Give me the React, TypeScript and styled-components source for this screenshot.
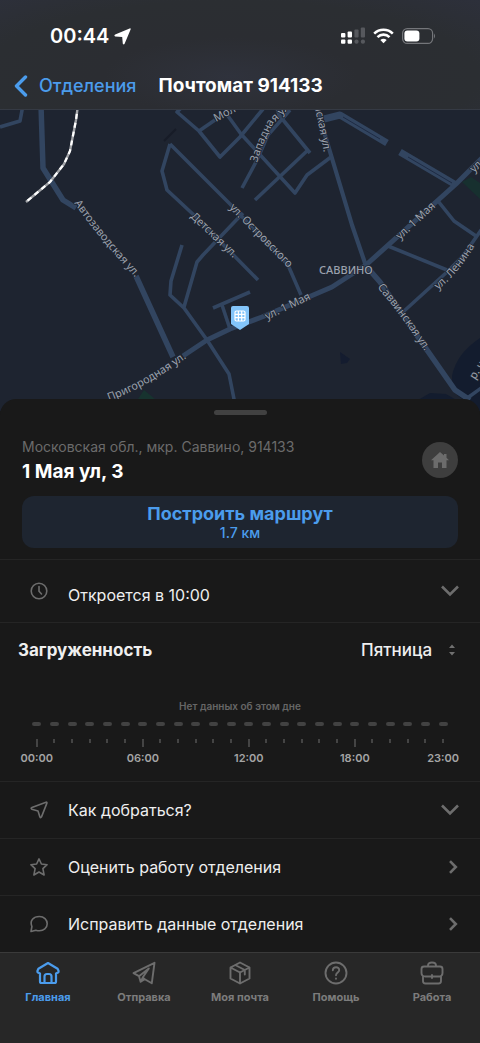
import React from 'react';
import styled, { createGlobalStyle } from 'styled-components';

const GlobalStyle = createGlobalStyle`
  *, *::before, *::after { box-sizing: border-box; }
  body { margin: 0; background: #191919; }
  button, select { font-family: inherit; color: inherit; }
`;

const Screen = styled.div`
  min-height: 100vh;
  display: flex;
  flex-direction: column;
  font-family: Inter, 'Liberation Sans', sans-serif;
  color: #efefef;
  background: #191919;
`;

const Header = styled.header`
  padding-top: 24px;
  background: radial-gradient(ellipse at 48% 70%, #2f323c 0%, #2b2d32 36%, #2b2e32 70%, #2d303b 100%);
  border-bottom: 1px solid #353a44;
`;

const StatusBar = styled.div`
  height: 24px;
  display: flex;
  align-items: center;
  justify-content: space-between;
  padding: 0 44px 0 50px;
  color: #fff;
`;

const StatusGroup = styled.div<{ $gap: number }>`
  display: flex;
  align-items: center;
  gap: ${(p) => p.$gap}px;
`;

const Clock = styled.span`
  font-size: 20px;
  line-height: 24px;
  font-weight: 600;
`;

const NavBar = styled.nav`
  height: 61px;
  display: flex;
  align-items: center;
  gap: 22px;
  padding: 14px 14px 0;
`;

const BackLink = styled.a`
  display: flex;
  align-items: center;
  gap: 11px;
  font-size: 18px;
  line-height: 24px;
  font-weight: 500;
  color: #4b9cec;
  text-decoration: none;
`;

const Title = styled.h1`
  margin: 0;
  font-size: 19px;
  line-height: 24px;
  font-weight: 700;
  color: #fff;
`;

const MapArea = styled.section`
  height: 301px;
  overflow: hidden;
  background: #1e2430;
  svg { display: block; width: 100%; height: 100%; }
`;

const Sheet = styled.main`
  position: relative;
  flex: 1;
  margin-top: -12px;
  border-radius: 16px 16px 0 0;
  background: #191919;
`;

const Handle = styled.div`
  width: 53px;
  height: 5px;
  border-radius: 3px;
  margin: 0 auto;
  background: #414141;
`;

const Summary = styled.section`
  padding: 11px 22px 11px;
  border-bottom: 1px solid #252525;
`;

const AddressRow = styled.div`
  display: flex;
  align-items: center;
  justify-content: space-between;
  margin-top: 20px;
`;

const Region = styled.p`
  margin: 0;
  font-size: 14px;
  line-height: 24px;
  color: #6b6b6b;
`;

const Street = styled.h2`
  margin: 0;
  font-size: 19px;
  line-height: 26px;
  font-weight: 700;
  color: #fff;
`;

const HomeButton = styled.button`
  width: 36px;
  height: 36px;
  padding: 0;
  border: 0;
  border-radius: 50%;
  display: grid;
  place-items: center;
  background: #3e3e3e;
  color: #6c6c6c;
`;

const RouteButton = styled.button`
  width: 100%;
  height: 52px;
  margin-top: 11px;
  padding: 2px 0 0;
  border: 0;
  border-radius: 12px;
  display: flex;
  flex-direction: column;
  align-items: center;
  justify-content: center;
  background: #1e2530;
  color: #4b9cec;
`;

const RouteTitle = styled.span`
  font-size: 18px;
  line-height: 20px;
  font-weight: 700;
`;

const RouteDistance = styled.span`
  font-size: 14px;
  line-height: 18px;
  font-weight: 500;
`;

const ActionRow = styled.button<{ $tall?: boolean }>`
  width: 100%;
  height: ${(p) => (p.$tall ? 63 : 57)}px;
  padding: 0 21px 0 30px;
  border: 0;
  border-bottom: 1px solid #252525;
  display: grid;
  grid-template-columns: 18px 1fr auto;
  column-gap: 20px;
  align-items: center;
  background: none;
  color: #6d6d6d;
  text-align: left;
  &:last-child { height: 56px; border-bottom: 0; }
`;

const ActionLabel = styled.span<{ $low?: boolean }>`
  font-size: 16px;
  line-height: 24px;
  padding-top: ${(p) => (p.$low ? 8 : 0)}px;
  color: #efefef;
`;

const Load = styled.section`
  padding-top: 15px;
  border-bottom: 1px solid #252525;
`;

const LoadHeader = styled.div`
  display: flex;
  align-items: center;
  justify-content: space-between;
  padding: 0 24px 0 18px;
`;

const LoadTitle = styled.h3`
  margin: 0;
  font-size: 17px;
  line-height: 24px;
  font-weight: 700;
`;

const DayPicker = styled.label`
  display: flex;
  align-items: center;
  gap: 15px;
`;

const DaySelect = styled.select`
  appearance: none;
  border: 0;
  padding: 0;
  background: none;
  font-size: 17px;
  line-height: 24px;
  font-weight: 500;
`;

const EmptyNote = styled.p`
  margin: 37px 0 9px;
  text-align: center;
  font-size: 10px;
  line-height: 14px;
  font-weight: 600;
  color: #666;
`;

const HourGrid = styled.div`
  display: grid;
  grid-template-columns: repeat(24, minmax(0, 1fr));
  padding: 0 28px 16px;
`;

const Hour = styled.div`
  display: flex;
  flex-direction: column;
  align-items: center;
`;

const Bar = styled.div`
  width: 9px;
  height: 4px;
  border-radius: 2px;
  background: #424242;
`;

const TickSlot = styled.div`
  height: 12px;
  margin-top: 13px;
`;

const Tick = styled.div<{ $major: boolean }>`
  width: 2px;
  height: ${(p) => (p.$major ? 8 : 4)}px;
  background: #444;
`;

const HourLabel = styled.span`
  font-size: 11px;
  line-height: 14px;
  font-weight: 600;
  white-space: nowrap;
  color: #a5a5a5;
`;

const TabBar = styled.nav`
  position: sticky;
  bottom: 0;
  height: 91px;
  padding-top: 8px;
  display: grid;
  grid-template-columns: repeat(5, 1fr);
  align-items: start;
  background: #272727;
  border-top: 1px solid #3a3a3a;
`;

const Tab = styled.a<{ $active?: boolean }>`
  display: flex;
  flex-direction: column;
  align-items: center;
  gap: 4px;
  font-size: 11px;
  line-height: 16px;
  font-weight: 700;
  text-decoration: none;
  color: ${(p) => (p.$active ? '#4b9cec' : '#7c7c7c')};
  svg { color: ${(p) => (p.$active ? '#4b9cec' : '#6d6d6d')}; }
`;

type IconProps = { size?: number; box?: number; stroke?: number; children: React.ReactNode };
const Icon = ({ size = 24, box = 24, stroke = 2, children }: IconProps) => (
  <svg width={size} height={size} viewBox={`0 0 ${box} ${box}`} fill="none" stroke="currentColor"
    strokeWidth={stroke} strokeLinecap="round" strokeLinejoin="round" aria-hidden="true">{children}</svg>
);

const ChevronDown = () => (
  <svg width="18" height="12" viewBox="0 0 18 12" fill="none" stroke="currentColor" strokeWidth="2.6" aria-hidden="true">
    <path d="M1 1.500 9 9.500 17 1.500" />
  </svg>
);
const ChevronRight = () => (
  <svg width="10" height="14" viewBox="0 0 10 14" fill="none" stroke="currentColor" strokeWidth="2.6" aria-hidden="true">
    <path d="M1 1.200 6.800 7 1 12.800" />
  </svg>
);

const thinRoads = [
  'M0 127 20 121 23 105',
  'M181 108 177 112 199 131 220 157 240 137 263 109',
  'M199 131 215 120',
  'M228 116 241 134 295 193 307 175 331 157',
  'M255 200 308 150',
  'M276 105 279 115 310 153',
  'M242 188 257 160 268 135 290 110',
  'M170 144 162 171 167 190 196 217 258 280',
  'M170 144 230 204 288 265 301 295',
  'M243 213 203 255 197 262 184 307',
  'M182 245 171 281 170 295 184 308 207 340 229 374 235 404',
  'M213 308 250 292',
  'M222 305 230 329',
  'M438 201 454 221 476 236',
  'M388 246 447 270',
  'M484 226 463 256 447 272 403 312',
  'M466 399 484 386',
];

const mapLabels = [
  { id: 'avto', d: 'M74 203 Q91 227 109 248 L150 294', text: 'Автозаводская ул.' },
  { id: 'mol', d: 'M216 122 300 78', text: 'Мол' },
  { id: 'zap', d: 'M257 163 Q264 140 273 124 L300 98', text: 'Западная ул.' },
  { id: 'sav1', d: 'M314 106 Q320 128 325 160', text: 'нская ул.' },
  { id: 'ostr', d: 'M229 208 300 280', text: 'ул. Островского' },
  { id: 'det', d: 'M190 217 250 274', text: 'Детская ул.' },
  { id: 'may1', d: 'M400 240 460 184', text: 'ул. 1 Мая' },
  { id: 'may2', d: 'M474 173 530 119', text: 'ул.' },
  { id: 'may3', d: 'M267 320 330 290', text: 'ул. 1 Мая' },
  { id: 'lenin', d: 'M438 290 Q457 275 474 247 L490 220', text: 'ул. Ленина' },
  { id: 'sav2', d: 'M377 287 Q399 313 413 334 L450 388', text: 'Саввинская ул.' },
  { id: 'prig', d: 'M109 401 Q150 386 194 352', text: 'Пригородная ул.' },
  { id: 'river', d: 'M475 380 510 325', text: 'р. ч' },
];

const StreetMap = () => (
  <svg viewBox="0 110 480 301" preserveAspectRatio="xMidYMid slice" role="img" aria-label="Карта: Саввино">
    <path d="M462 182 471 177 480 183V199Z" fill="#17302f" />
    <path d="M138 399 144 390 155 399Z" fill="#17332f" />
    <path d="M480 338Q456 354 452 376 451 388 458 396L480 411Z" fill="#131c2e" />
    <path d="M418 400 430 393 446 394 460 402Z" fill="#131c2e" />
    <path d="M340 352 350 359 347 363 341 364Z" fill="#141c2f" />
    <path d="M164 141 176 129" stroke="#171c27" strokeWidth="2" />
    <g fill="none" stroke="#324560" strokeLinejoin="round">
      {thinRoads.map((d) => <path key={d} d={d} strokeWidth="3.6" />)}
      <path d="M316 105 331 155 352 225 366 266" strokeWidth="4.2" />
      <path d="M41 105 43 168 63 200 76 208M136 276 173 357" strokeWidth="5.5" />
      <path d="M484 156 456 184 366 265 332 287 262 317 230 329 207 340 183 356" strokeWidth="5" />
      <path d="M366 266 380 282 427 350 455 390 470 400" strokeWidth="5.5" />
      <path d="M324 119 340 115 387 143M400 152 456 185" strokeWidth="7" />
    </g>
    <path d="M343 117 380 139M408 157 452 183" stroke="#1e2b44" strokeWidth="1" />
    <g fill="none">
      <path d="M78 105 76 120 70 151 64 164 50 182 26 202" stroke="#a3a5a9" strokeWidth="2.4" />
      <path d="M78 105 76 120 70 151 64 164 50 182 26 202" stroke="#fff" strokeWidth="2.200" strokeDasharray="5 4" />
    </g>
    <g fontFamily="'Noto Sans', sans-serif" fontSize="11" fill="#9ba1ad" stroke="#1e2430" strokeWidth="1.500" paintOrder="stroke">
      {mapLabels.map((l) => (
        <React.Fragment key={l.id}>
          <path id={l.id} d={l.d} fill="none" stroke="none" />
          <text><textPath href={`#${l.id}`}>{l.text}</textPath></text>
        </React.Fragment>
      ))}
      <text x="319" y="274" fontWeight="500">САВВИНО</text>
    </g>
    <path d="M233 306h14a2 2 0 0 1 2 2v16l-9 6-9-6v-16a2 2 0 0 1 2-2Z" fill="#83c5fa" />
    <g fill="none" stroke="#fff" strokeWidth="1.2">
      <rect x="235" y="311" width="10" height="10" rx="1.5" />
      <path d="M238.4 311v10M241.7 311v10M235 314.4h10M235 317.7h10" />
    </g>
  </svg>
);

const Cellular = () => (
  <svg width="24" height="18" viewBox="0 0 24 18" fill="currentColor" aria-hidden="true">
    <rect x="0" y="6" width="4.4" height="4.6" rx="1" /><rect x="0" y="12.6" width="4.4" height="4.2" rx="1" />
    <rect x="6.6" y="4.6" width="4.4" height="6" rx="1" /><rect x="6.6" y="12.6" width="4.4" height="4.2" rx="1" />
    <g fill="#56585d">
      <rect x="13.4" y="2.6" width="4.2" height="8" rx="1" /><rect x="13.4" y="12.6" width="4.2" height="4.2" rx="2" />
      <rect x="19.8" y="0.6" width="4.2" height="10" rx="1" /><rect x="19.8" y="12.6" width="4.2" height="4.2" rx="2" />
    </g>
  </svg>
);

const Wifi = () => (
  <svg width="21" height="16" viewBox="0 0 21 16" fill="none" stroke="currentColor" strokeWidth="2.6" aria-hidden="true">
    <path d="M1.2 5.6C6.4.5 14.6.5 19.8 5.6" />
    <path d="M4.5 9.1c3.4-3.3 8.6-3.3 12 0" />
    <path d="M10.5 15.2 7.3 12q3.2-2.6 6.4 0Z" fill="currentColor" stroke="none" />
  </svg>
);

const Battery = () => (
  <svg width="34" height="16" viewBox="0 0 34 16" aria-hidden="true">
    <rect x=".6" y=".6" width="30" height="14.8" rx="4.6" fill="none" stroke="#74767a" strokeWidth="1.2" />
    <rect x="2.4" y="2.6" width="15" height="10.8" rx="3" fill="#fff" />
    <path d="M32 5.4q2 2.4 0 5.2Z" fill="#74767a" />
  </svg>
);

const hours = Array.from({ length: 24 }, (_, h) => h);
const labelled: Record<number, string> = { 0: '00:00', 6: '06:00', 12: '12:00', 18: '18:00', 23: '23:00' };

const tabs = [
  { label: 'Главная', icon: (
    <path d="M5.500 22A1.500 1.500 0 0 1 4 20.500V12.500L2 11.500Q1.200 11 1.500 9.800L2.400 7.800 12 2 21.600 7.800 22.500 9.800Q22.800 11 22 11.500L20 12.500V20.500A1.500 1.500 0 0 1 18.500 22ZM8.500 22V15.500Q8.500 13 11 13H13Q15.500 13 15.500 15.500V22" />
  ) },
  { label: 'Отправка', icon: (
    <path d="M22.500 1.800 1.500 12.200 7 15.200 8.600 20.800 12.800 18.200 19.800 22.200ZM7 15.200 16.800 7.400 10.700 16.600 8.600 20.800M10.700 16.600 12.800 18.200" />
  ) },
  { label: 'Моя почта', icon: (
    <path d="M12 1.500 21.500 6.500V17.500L12 22.500 2.500 17.500V6.500ZM2.500 6.500 12 11.500 21.500 6.500M12 11.500V22.500M7.200 4 16.800 9V13.500" />
  ) },
  { label: 'Помощь', icon: (
    <><circle cx="12" cy="12" r="10.500" /><path d="M8.800 9.300C9 5.200 15.400 5.400 15.200 9.200 15.100 11.500 12 11.700 12 14.300M12 17.500V17.700" /></>
  ) },
  { label: 'Работа', icon: (
    <path d="M8 5.500V4.500Q8 1.500 12 1.500T16 4.500V5.500M4 5.500H20Q22.500 5.500 22.500 8V12Q22.500 15.500 18.500 15.500H5.500Q1.500 15.500 1.500 12V8Q1.500 5.500 4 5.500ZM3 15V20Q3 22.500 5.500 22.500H18.500Q21 22.500 21 20V15M12 14V17" />
  ) },
];

export default function App() {
  return (
    <Screen>
      <GlobalStyle />
      <Header>
        <StatusBar>
          <StatusGroup $gap={5}>
            <Clock>00:44</Clock>
            <svg width="17" height="17" viewBox="0 0 17 17" fill="currentColor" aria-hidden="true">
              <path d="M15.600.400Q17 0 16.600 1.400L10.600 15.800Q9.800 17.200 8.800 15.800L8.200 9 1.200 8.400Q-.4 7.400 1.200 6.600Z" />
            </svg>
          </StatusGroup>
          <StatusGroup $gap={8}><Cellular /><Wifi /><Battery /></StatusGroup>
        </StatusBar>
        <NavBar>
          <BackLink href="#offices">
            <svg width="14" height="22" viewBox="0 0 14 22" fill="none" stroke="currentColor" strokeWidth="3.4" strokeLinecap="round" strokeLinejoin="round" aria-hidden="true">
              <path d="M11.500 2 2.500 11 11.500 20" />
            </svg>
            Отделения
          </BackLink>
          <Title>Почтомат 914133</Title>
        </NavBar>
      </Header>

      <MapArea><StreetMap /></MapArea>

      <Sheet>
        <Summary>
          <Handle />
          <AddressRow>
            <div>
              <Region>Московская обл., мкр. Саввино, 914133</Region>
              <Street>1 Мая ул, 3</Street>
            </div>
            <HomeButton aria-label="Сделать домашним отделением">
              <svg width="18" height="16" viewBox="0 0 18 16" fill="currentColor" aria-hidden="true">
                <path d="M9 0 13 3.600V2H15.500V5.800L18 8.200H15.500V16H11V10.500H7V16H2.500V8.200H0Z" />
              </svg>
            </HomeButton>
          </AddressRow>
          <RouteButton>
            <RouteTitle>Построить маршрут</RouteTitle>
            <RouteDistance>1.7 км</RouteDistance>
          </RouteButton>
        </Summary>

        <ActionRow $tall>
          <Icon size={18} box={18} stroke={1.6}><circle cx="9" cy="9" r="7.800" /><path d="M9 4.500V9.300L11.500 12" /></Icon>
          <ActionLabel $low>Откроется в 10:00</ActionLabel>
          <ChevronDown />
        </ActionRow>

        <Load>
          <LoadHeader>
            <LoadTitle>Загруженность</LoadTitle>
            <DayPicker>
              <DaySelect aria-label="День недели" defaultValue="Пятница"><option>Пятница</option></DaySelect>
              <svg width="8" height="12" viewBox="0 0 8 12" fill="#707070" aria-hidden="true">
                <path d="M4 .5 7 4H1ZM4 11.500 7 8H1Z" />
              </svg>
            </DayPicker>
          </LoadHeader>
          <EmptyNote>Нет данных об этом дне</EmptyNote>
          <HourGrid>
            {hours.map((h) => (
              <Hour key={h}>
                <Bar />
                <TickSlot><Tick $major={h % 6 === 0} /></TickSlot>
                {labelled[h] && <HourLabel>{labelled[h]}</HourLabel>}
              </Hour>
            ))}
          </HourGrid>
        </Load>

        <ActionRow>
          <Icon size={18} box={18} stroke={1.6}><path d="M16 1.200Q17.200 1 16.900 2.100L11.500 15.900Q10.600 17.400 9.900 15.900L8 9.900 1.900 8.200Q.3 7.300 1.900 6.500Z" /></Icon>
          <ActionLabel>Как добраться?</ActionLabel>
          <ChevronDown />
        </ActionRow>
        <ActionRow>
          <Icon size={18} box={18} stroke={1.6}><path d="M9 .9 11.400 6 17.100 6.700 12.900 10.700 14.100 17 9 14 3.900 17 5.100 10.700.9 6.700 6.600 6Z" /></Icon>
          <ActionLabel>Оценить работу отделения</ActionLabel>
          <ChevronRight />
        </ActionRow>
        <ActionRow>
          <Icon size={18} box={18} stroke={1.6}><path d="M1 16.500 1.900 11.500C-.6 5.500 3.500 1.500 9.400 1.500 14 1.500 17.200 4.800 17.200 8.800 17.200 13.300 13.500 15.800 9.400 15.800 7.800 15.800 6.700 15.500 5.800 15.200Z" /></Icon>
          <ActionLabel>Исправить данные отделения</ActionLabel>
          <ChevronRight />
        </ActionRow>
      </Sheet>

      <TabBar>
        {tabs.map((t, i) => (
          <Tab key={t.label} href={`#tab-${i}`} $active={i === 0}>
            <Icon stroke={i === 0 ? 2.2 : 1.9}>{t.icon}</Icon>
            {t.label}
          </Tab>
        ))}
      </TabBar>
    </Screen>
  );
}
